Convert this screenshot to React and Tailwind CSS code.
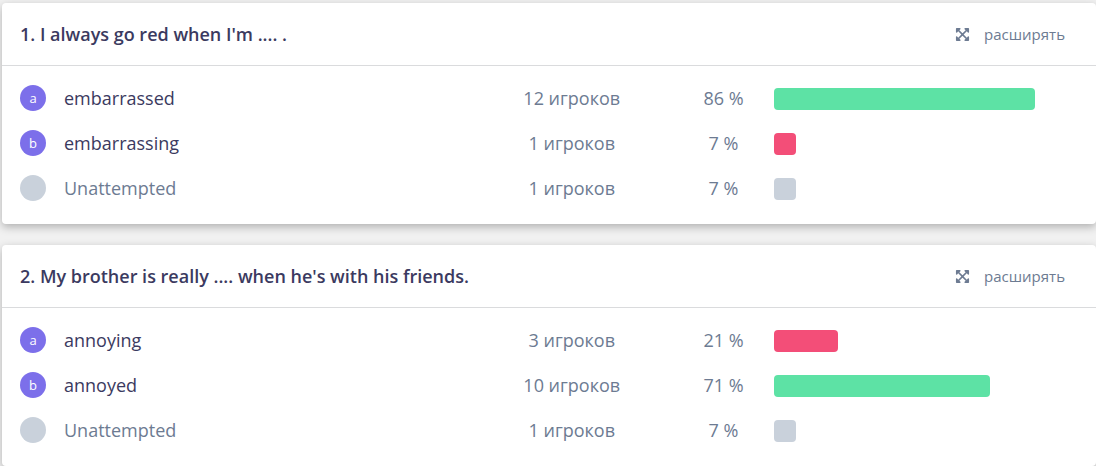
import { FaExpandArrowsAlt } from "react-icons/fa";

const questions = [
  {
    id: 1,
    title: "1. I always go red when I'm .... .",
    answers: [
      { key: "a", label: "embarrassed", players: 12, percent: 86, status: "correct" },
      { key: "b", label: "embarrassing", players: 1, percent: 7, status: "wrong" },
      { key: "", label: "Unattempted", players: 1, percent: 7, status: "skipped" },
    ],
  },
  {
    id: 2,
    title: "2. My brother is really .... when he's with his friends.",
    answers: [
      { key: "a", label: "annoying", players: 3, percent: 21, status: "wrong" },
      { key: "b", label: "annoyed", players: 10, percent: 71, status: "correct" },
      { key: "", label: "Unattempted", players: 1, percent: 7, status: "skipped" },
    ],
  },
];

const barColors = {
  correct: "bg-[#5de2a5]",
  wrong: "bg-[#f34e78]",
  skipped: "bg-[#c9d1db]",
};

function AnswerRow({ answer }) {
  const skipped = answer.status === "skipped";

  return (
    <tr className="h-[45px] align-top text-[18px] leading-[26px] text-[#6d7b92]">
      <td className="pt-[9px]">
        <div className={`flex items-center gap-[18px] ${skipped ? "" : "text-[#3b3a60]"}`}>
          <span
            className={`flex size-[26px] shrink-0 items-center justify-center rounded-full text-[13px] text-white ${
              skipped ? "bg-[#c9d1db]" : "bg-[#7c6fea]"
            }`}
          >
            {answer.key}
          </span>
          <span>{answer.label}</span>
        </div>
      </td>
      <td className="pt-[9px] text-center">{answer.players} игроков</td>
      <td className="pt-[9px] text-center">{answer.percent} %</td>
      <td className="pt-3">
        <div
          className={`h-[22px] rounded-[4px] ${barColors[answer.status]}`}
          style={{ width: `${answer.percent}%` }}
        />
      </td>
    </tr>
  );
}

function QuestionCard({ question }) {
  return (
    <section className="rounded-[4px] bg-white shadow-[0_3px_8px_rgba(0,0,0,0.27)]">
      <header className="flex h-[63px] items-center justify-between border-b border-[#dadbdd] pr-[31px] pl-[18px]">
        <h2 className="text-[18px] font-semibold text-[#3b3a60]">{question.title}</h2>
        <button type="button" className="flex items-center gap-[14px] text-[15px] text-[#6d7b92]">
          <FaExpandArrowsAlt className="size-[15px]" />
          расширять
        </button>
      </header>
      <div className="px-[18px] pt-[10px] pb-[13px]">
        <table className="w-full table-fixed">
          <colgroup>
            <col className="w-[42.6%]" />
            <col className="w-[19.1%]" />
            <col className="w-[9.6%]" />
            <col />
          </colgroup>
          <tbody>
            {question.answers.map((answer) => (
              <AnswerRow key={answer.label} answer={answer} />
            ))}
          </tbody>
        </table>
      </div>
    </section>
  );
}

export default function App() {
  return (
    <main className="flex h-screen flex-col gap-[21px] overflow-hidden bg-[#f1f1f1] pt-[3px] pl-[2px] font-['Open_Sans',sans-serif]">
      {questions.map((question) => (
        <QuestionCard key={question.id} question={question} />
      ))}
    </main>
  );
}
